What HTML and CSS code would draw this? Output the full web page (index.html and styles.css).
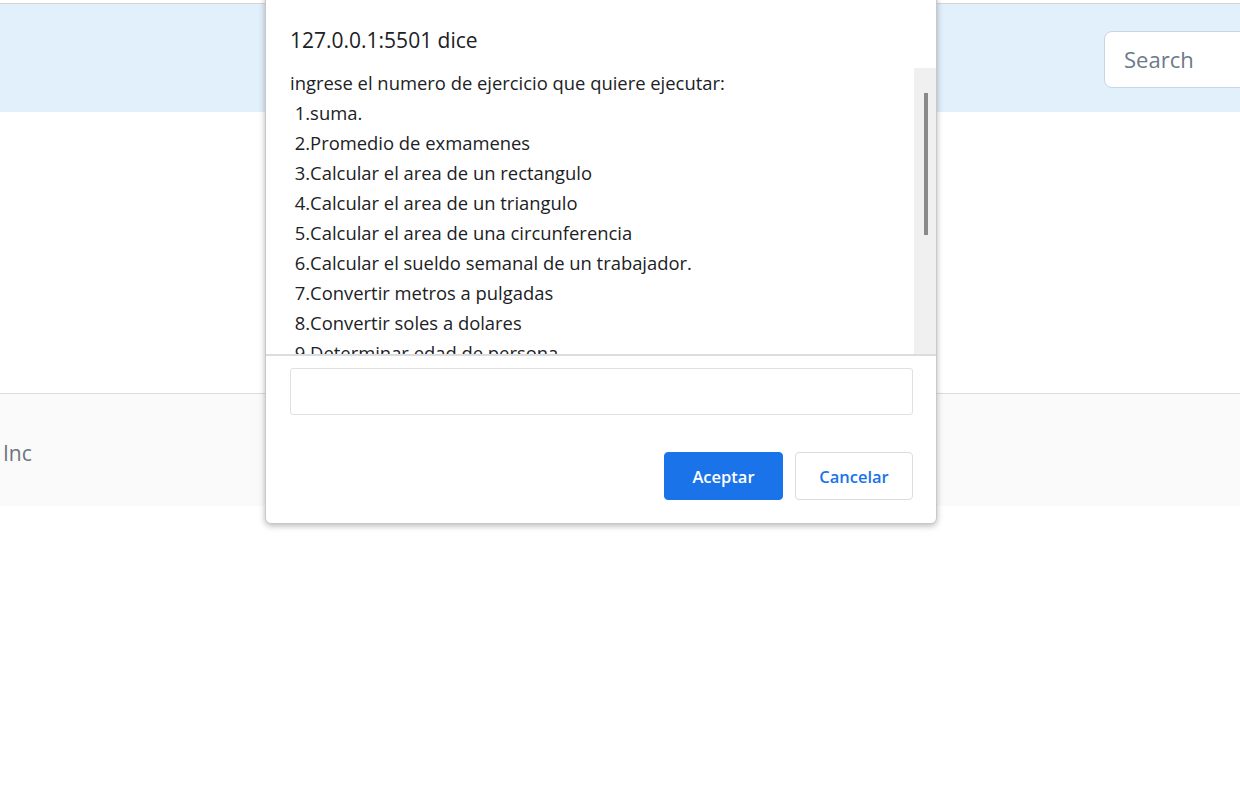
FILE: index.html
```html
<!DOCTYPE html>
<html lang="es">
<head>
<meta charset="utf-8">
<title>Ejercicios</title>
<link rel="stylesheet" href="styles.css">
</head>
<body>
<header class="navbar">
  <div class="nav-space"></div>
  <input class="search" type="text" placeholder="Search">
</header>
<main class="main"></main>
<footer class="footer">
  <span class="footer-text">Inc</span>
</footer>

<div class="dialog">
  <div class="dialog-title">127.0.0.1:5501 dice</div>
  <div class="dialog-body">
    <div class="message">
      <div class="line">ingrese el numero de ejercicio que quiere ejecutar:</div>
      <div class="line">&nbsp;1.suma.</div>
      <div class="line">&nbsp;2.Promedio de exmamenes</div>
      <div class="line">&nbsp;3.Calcular el area de un rectangulo</div>
      <div class="line">&nbsp;4.Calcular el area de un triangulo</div>
      <div class="line">&nbsp;5.Calcular el area de una circunferencia</div>
      <div class="line">&nbsp;6.Calcular el sueldo semanal de un trabajador.</div>
      <div class="line">&nbsp;7.Convertir metros a pulgadas</div>
      <div class="line">&nbsp;8.Convertir soles a dolares</div>
      <div class="line">&nbsp;9.Determinar edad de persona</div>
      <div class="line">&nbsp;10.Salir</div>
    </div>
    <div class="scroll-track"><div class="scroll-thumb"></div></div>
  </div>
  <div class="dialog-input-wrap">
    <input class="dialog-input" type="text">
  </div>
  <div class="dialog-buttons">
    <button class="btn btn-primary">Aceptar</button>
    <button class="btn btn-secondary">Cancelar</button>
  </div>
</div>
</body>
</html>
```

FILE: styles.css
```css
html, body {
  margin: 0;
  padding: 0;
  background: #ffffff;
  overflow: hidden;
  width: 1240px;
  height: 787px;
}

body {
  padding-top: 3px;
  font-family: "Open Sans", "Noto Sans", "Liberation Sans", sans-serif;
  box-sizing: border-box;
}

.navbar {
  height: 108px;
  border-top: 1px solid #d4d4d4;
  background: #e2f0fc;
  display: grid;
  grid-template-columns: 1104px 220px;
  align-items: center;
}

.search {
  box-sizing: border-box;
  height: 57px;
  width: 220px;
  margin-top: 2px;
  border: 1px solid #c9d5e2;
  border-radius: 8px;
  background: #fff;
  padding: 0 19px;
  font-family: inherit;
  font-size: 22px;
  color: #495057;
  outline: none;
}

.search::placeholder {
  color: #6c7a89;
}

.main {
  height: 281px;
}

.footer {
  border-top: 1px solid #dcdcdc;
  background: #fafafa;
  height: 112px;
  display: flex;
  align-items: center;
  padding-left: 3px;
}

.footer-text {
  font-size: 21px;
  color: #6c757d;
  margin-top: 6px;
}

/* Dialog (overlay) */
.dialog {
  position: absolute;
  left: 265px;
  top: -6px;
  width: 672px;
  box-sizing: border-box;
  background: #fff;
  border: 1px solid #c8c8c8;
  border-radius: 6px;
  box-shadow: 0 2px 6px rgba(0, 0, 0, 0.28);
  font-family: "Open Sans", "Noto Sans", "Liberation Sans", sans-serif;
  color: #202124;
}

.dialog-title {
  padding: 30px 24px 0 24px;
  height: 43px;
  font-size: 21px;
  line-height: 30px;
  color: #202124;
}

.dialog-body {
  display: flex;
  height: 286px;
  border-bottom: 2px solid #dadce0;
}

.message {
  flex: 1;
  overflow: hidden;
  padding-left: 24px;
  font-size: 18.4px;
  line-height: 30px;
  white-space: nowrap;
}

.scroll-track {
  width: 22px;
  background: #f0f0f0;
  display: flex;
  justify-content: center;
  padding-top: 25px;
  box-sizing: border-box;
}

.scroll-thumb {
  width: 4px;
  height: 142px;
  background: #8a8a8a;
  margin-left: 1px;
}

.dialog-input-wrap {
  padding: 12px 23px 0 24px;
}

.dialog-input {
  display: block;
  box-sizing: border-box;
  width: 100%;
  height: 47px;
  border: 1px solid #e0e0e0;
  border-radius: 3px;
  outline: none;
  font-family: inherit;
  font-size: 16px;
}

.dialog-buttons {
  display: flex;
  justify-content: flex-end;
  gap: 12px;
  padding: 37px 23px 23px 24px;
}

.btn {
  box-sizing: border-box;
  width: 118px;
  height: 48px;
  border-radius: 4px;
  font-family: inherit;
  font-size: 16.5px;
  font-weight: 600;
  cursor: pointer;
}

.btn-primary {
  width: 119px;
  background: #1a73e8;
  border: 1px solid #1a73e8;
  color: #fff;
}

.btn-secondary {
  background: #fff;
  border: 1px solid #dadce0;
  color: #1a73e8;
}
```
